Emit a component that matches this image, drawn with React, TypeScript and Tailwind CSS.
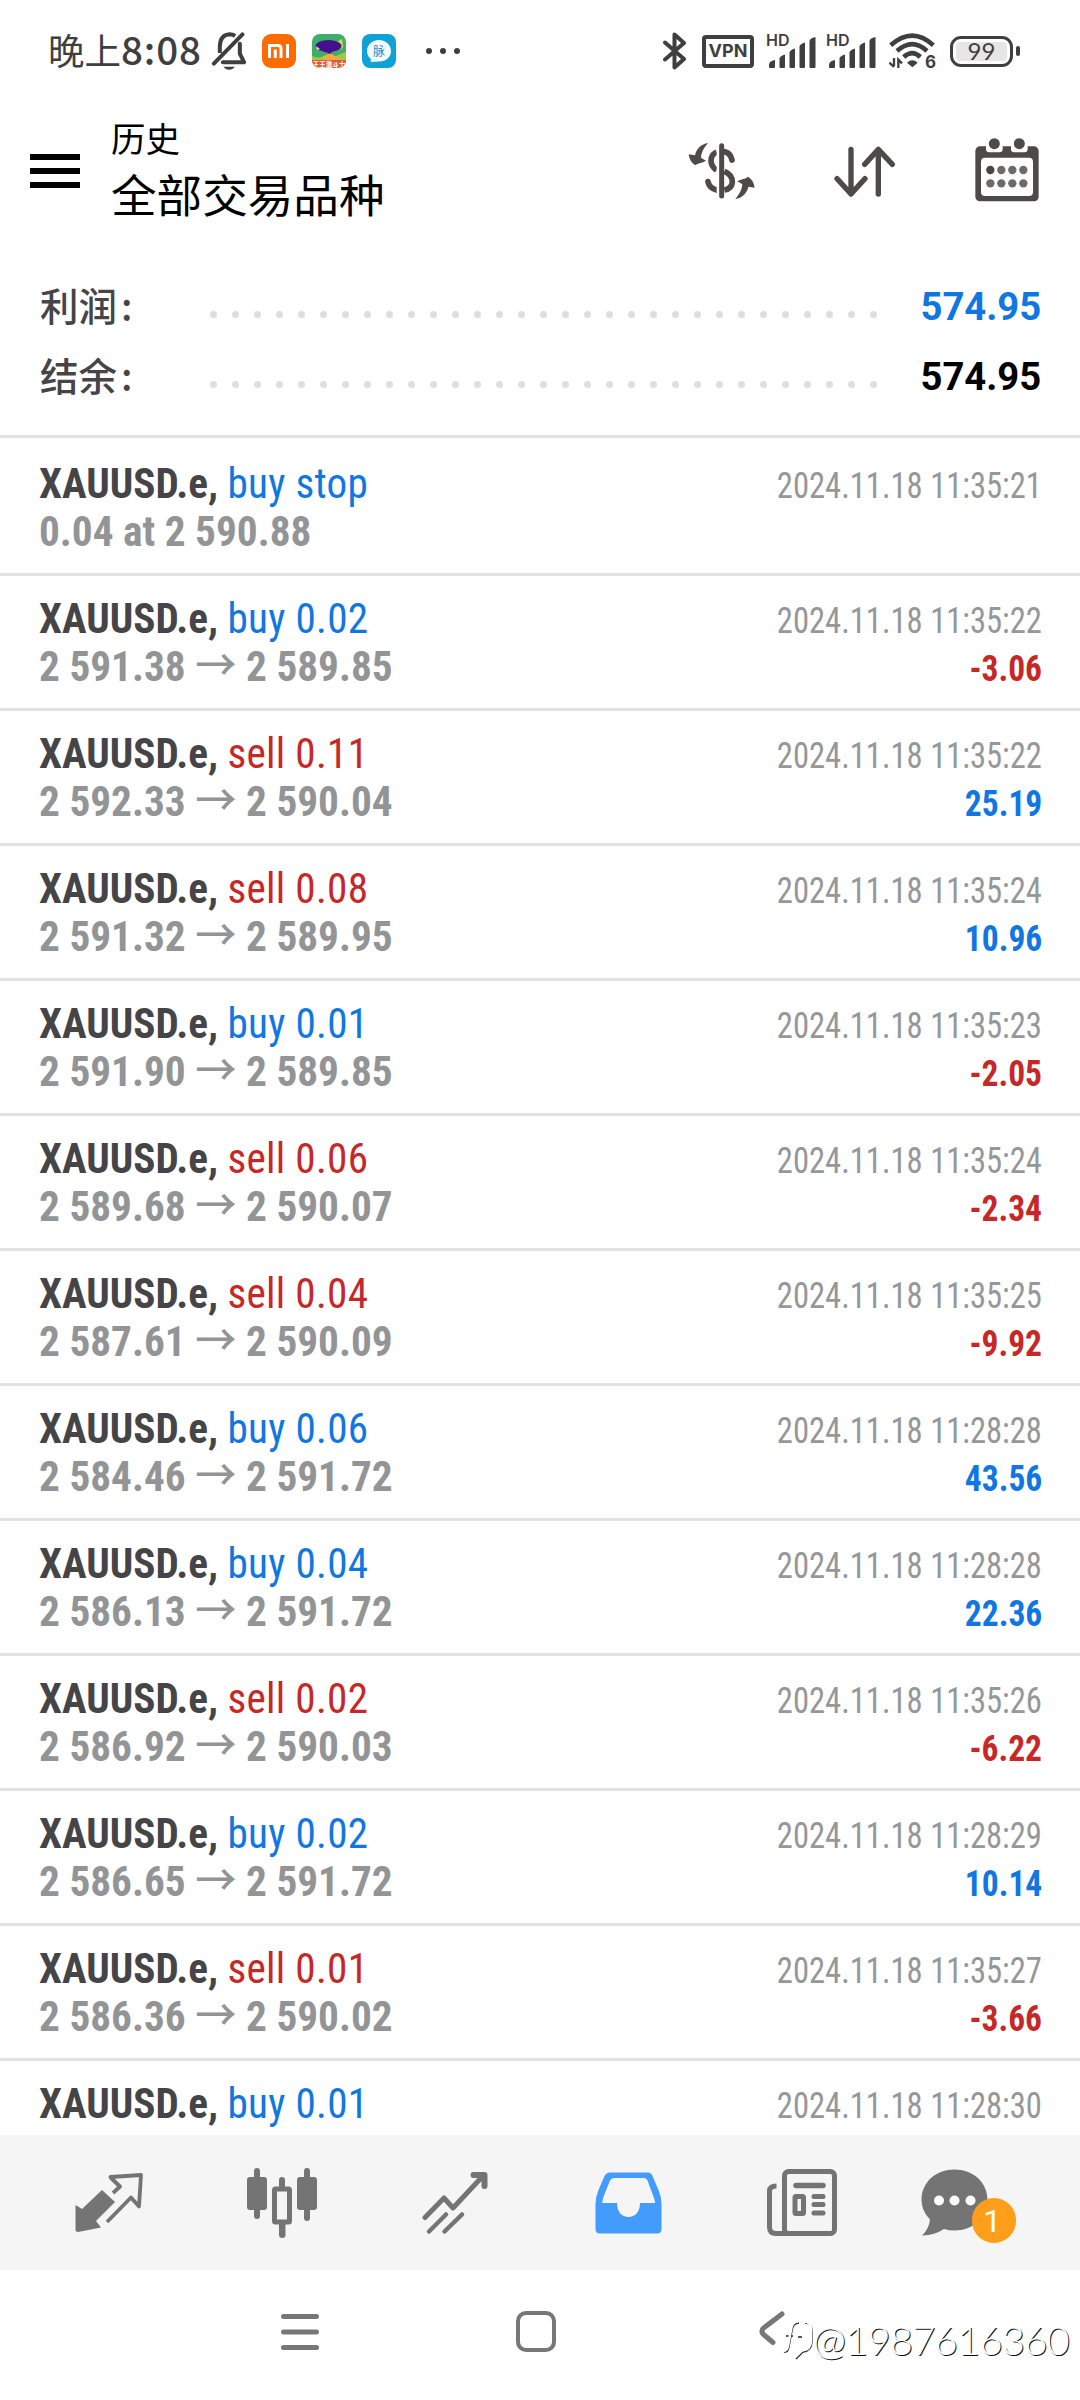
import type { ReactNode } from 'react'

type Side = 'buy' | 'sell'

interface Deal {
  side: Side
  volume: string
  open: string
  close: string
  time: string
  profit?: string
}

const SYMBOL = 'XAUUSD.e'

const deals: Deal[] = [
  { side: 'buy', volume: '0.02', open: '2 591.38', close: '2 589.85', time: '2024.11.18 11:35:22', profit: '-3.06' },
  { side: 'sell', volume: '0.11', open: '2 592.33', close: '2 590.04', time: '2024.11.18 11:35:22', profit: '25.19' },
  { side: 'sell', volume: '0.08', open: '2 591.32', close: '2 589.95', time: '2024.11.18 11:35:24', profit: '10.96' },
  { side: 'buy', volume: '0.01', open: '2 591.90', close: '2 589.85', time: '2024.11.18 11:35:23', profit: '-2.05' },
  { side: 'sell', volume: '0.06', open: '2 589.68', close: '2 590.07', time: '2024.11.18 11:35:24', profit: '-2.34' },
  { side: 'sell', volume: '0.04', open: '2 587.61', close: '2 590.09', time: '2024.11.18 11:35:25', profit: '-9.92' },
  { side: 'buy', volume: '0.06', open: '2 584.46', close: '2 591.72', time: '2024.11.18 11:28:28', profit: '43.56' },
  { side: 'buy', volume: '0.04', open: '2 586.13', close: '2 591.72', time: '2024.11.18 11:28:28', profit: '22.36' },
  { side: 'sell', volume: '0.02', open: '2 586.92', close: '2 590.03', time: '2024.11.18 11:35:26', profit: '-6.22' },
  { side: 'buy', volume: '0.02', open: '2 586.65', close: '2 591.72', time: '2024.11.18 11:28:29', profit: '10.14' },
  { side: 'sell', volume: '0.01', open: '2 586.36', close: '2 590.02', time: '2024.11.18 11:35:27', profit: '-3.66' },
  { side: 'buy', volume: '0.01', open: '2 586.37', close: '2 591.72', time: '2024.11.18 11:28:30' },
]

// ── Status bar ─────────────────────────────────────────────────────────

function SignalIcon() {
  return (
    <div className="relative h-[34px] w-[50px]">
      <span className="absolute -top-[4px] left-0 font-['Inter'] text-[16px] leading-[20px] font-semibold">HD</span>
      <svg className="absolute top-0 left-[3px]" width="47" height="34" viewBox="0 0 47 34" fill="#3f3f3f">
        <path d="M0 31 Q0 27 6 26 V33 Q6 34 5 34 H1 Q0 34 0 33Z" />
        <path d="M10.500 24.500 Q11 22 16 20.500 V33 Q16 34 15 34 H11.500 Q10.500 34 10.500 33Z" />
        <path d="M20.500 18.500 Q21 16 26 14.500 V33 Q26 34 25 34 H21.500 Q20.500 34 20.500 33Z" />
        <path d="M30.500 12.500 Q31 10 36 8.500 V33 Q36 34 35 34 H31.500 Q30.500 34 30.500 33Z" />
        <path d="M40.500 7 Q41 4 46.500 3 V33 Q46.500 34 45.500 34 H41.500 Q40.500 34 40.500 33Z" />
      </svg>
    </div>
  )
}

function StatusBar() {
  return (
    <div className="flex h-[102px] shrink-0 items-center pr-[60px] pl-[48px] text-[#3f3f3f]">
      <div className="-mt-[4px] flex w-[155px] items-baseline font-['Noto_Sans_CJK_SC',sans-serif] leading-[50px] font-medium whitespace-nowrap">
        <span className="text-[36.500px] font-normal">晚上</span>
        <span className="text-[38.500px] tracking-[0.900px]">8:08</span>
      </div>

      {/* Muted bell */}
      <svg className="ml-[8px]" width="37" height="40" viewBox="34 34 108 120" fill="none" stroke="#3f3f3f" strokeWidth="12">
        <path d="M59 100 V80 Q60 46 88 44 Q98 44 105 49" />
        <path d="M119 72 V102 L132 128 H68" strokeLinecap="round" strokeLinejoin="round" />
        <path d="M127 44 L41 132" strokeLinecap="round" />
        <path d="M70 141 H104 Q98 150 87 150 Q76 150 70 141Z" fill="#3f3f3f" stroke="none" />
      </svg>

      <svg className="ml-[14px] rounded-[9px] bg-[#fc6c00]" width="34" height="34" viewBox="0 0 34 34" fill="none" stroke="#fff" strokeWidth="3">
        <path d="M7.500 24 V11.500 H16 Q19 11.500 19 14.500 V24" />
        <path d="M13.300 15.500 V24" />
        <path d="M25.500 10 V24" />
      </svg>

      <div className="relative ml-[16px] h-[34px] w-[34px] overflow-hidden rounded-[8px]">
        <svg width="34" height="34" viewBox="0 0 34 34">
          <rect width="34" height="34" fill="#3fae6c" />
          <path d="M0 22 Q8 26 14 21 L24 22 L34 18 V27 H0Z" fill="#a5c93c" />
          <path d="M8 24 L18 19 L28 25 L20 27Z" fill="#f6a93b" />
          <path d="M25 8 L30 5 L31 13 L28 16Z" fill="#e4dc3a" />
          <ellipse cx="16.500" cy="12" rx="13" ry="6" fill="#43108f" />
          <path d="M11 17 L18 20 L22 16Z" fill="#43108f" />
          <path d="M4 12 L8 15 L5 16Z" fill="#f4e58a" />
          <path d="M0 26 H34 V34 H0Z" fill="#e4573c" />
        </svg>
        <span className="absolute bottom-0 left-0 w-full text-center font-['Noto_Sans_CJK_SC',sans-serif] text-[6.500px] leading-[8px] font-bold whitespace-nowrap text-white">王王激斗士</span>
      </div>

      <div className="relative ml-[16px] flex h-[34px] w-[34px] items-center justify-center rounded-[8px] bg-[#0ea3d4]">
        <svg className="absolute inset-0" width="34" height="34" viewBox="0 0 34 34" fill="#f3fbfe">
          <path d="M17 6 C24 6 29 11 29 17 C29 23 24 27.500 17.500 27.500 Q13 27.500 8.500 28 L9 25 Q5 22 5 17 C5 11 10 6 17 6Z" />
        </svg>
        <span className="relative font-['Noto_Sans_CJK_SC',sans-serif] text-[12px] leading-[14px] text-[#0e8fd0]">脉</span>
      </div>

      <svg className="ml-[29px]" width="36" height="8" viewBox="0 0 36 8" fill="#3f3f3f">
        <circle cx="4" cy="4" r="3" />
        <circle cx="18" cy="4" r="3" />
        <circle cx="32" cy="4" r="3" />
      </svg>

      <div className="ml-auto flex items-center">
        {/* Bluetooth */}
        <svg width="24" height="38" viewBox="0 0 24 38" fill="none" stroke="#3f3f3f" strokeWidth="4" strokeLinecap="round" strokeLinejoin="round">
          <path d="M2 10.500 L21 27 L11.500 35.500 V2.500 L21 11 L2 27.500" />
        </svg>
        <div className="ml-[15px] flex h-[33px] w-[52px] items-center justify-center rounded-[4px] border-[4px] border-[#3f3f3f] font-['Inter'] text-[18px] leading-none font-bold">
          VPN
        </div>
        <div className="ml-[12px] flex gap-[10px]">
          <SignalIcon />
          <SignalIcon />
        </div>
        {/* Wi-Fi 6 */}
        <div className="relative ml-[13px] h-[36px] w-[46px]">
          <svg width="46" height="36" viewBox="690 43 138 108" fill="none" stroke="#3f3f3f" strokeWidth="14">
            <path d="M695 80 Q760 22 823 80" />
            <path d="M714 97 Q760 56 804 97" />
            <path d="M734 115 Q760 92 784 115" />
            <path d="M744 132 Q760 118 776 132 L760 146Z" fill="#3f3f3f" stroke="none" />
            <path d="M705 118 V142 M691 132 L705 145 M718 148 V123 L729 134" strokeWidth="7" />
          </svg>
          <span className="absolute -right-[1px] -bottom-[3px] font-['Inter'] text-[17px] leading-[20px] font-bold">6</span>
        </div>
        {/* Battery */}
        <div className="ml-[15px] flex h-[31px] w-[63px] items-center justify-center rounded-[11px] border-[3.500px] border-[#3f3f3f] p-[3px]">
          <div className="flex h-full w-full items-center justify-center rounded-[4px] bg-[#e6e6e6] font-['Lato'] text-[24px] leading-none">
            99
          </div>
        </div>
        <div className="ml-[3px] h-[10px] w-[4px] rounded-full bg-[#3f3f3f]" />
      </div>
    </div>
  )
}

// ── App bar ────────────────────────────────────────────────────────────

function CurrencyIcon() {
  const arrow = 'M100 39 C80 42 65 56 61 76 L42 73 C44 88 50 99 62 106 C70 98 82 100 94 92 L79 83 C80 66 89 52 100 39Z'
  return (
    <svg width="67" height="58" viewBox="40 36 201 174" fill="none" stroke="#4f4a47" strokeWidth="17">
      <path d="M141 47 V198" strokeWidth="15" strokeLinecap="round" />
      <path d="M149 65 Q167 68 172 90" strokeLinecap="round" />
      <path d="M126 66 Q109 74 109 92 Q109 108 126 121" />
      <path d="M149 124 Q173 134 173 156 Q172 176 149 180" />
      <path d="M100 155 Q103 173 126 180" strokeLinecap="round" />
      <path d="M126 130 V190 H133 V58 H126Z" fill="#fff" stroke="none" />
      <path d={arrow} fill="#4f4a47" stroke="none" />
      <path d={arrow} fill="#4f4a47" stroke="none" transform="rotate(180 141 123)" />
    </svg>
  )
}

function SortIcon() {
  return (
    <svg width="62" height="51" viewBox="478 46 186 153" fill="none" stroke="#4f4a47" strokeWidth="16" strokeLinecap="round" strokeLinejoin="round">
      <path d="M529 56 V190 M487 144 L529 190 L571 144" />
      <path d="M611 190 V56 M570 101 L611 56 L653 101" />
    </svg>
  )
}

function CalendarIcon() {
  const xs = [945, 978, 1011, 1044]
  return (
    <svg width="64" height="64" viewBox="899 23 192 192">
      <rect x="900" y="48" width="190" height="165" rx="14" fill="#4f4a47" />
      <rect x="917" y="82" width="156" height="115" rx="12" fill="#fff" />
      <rect x="932" y="20" width="50" height="46" rx="10" fill="#fff" />
      <rect x="1007" y="20" width="50" height="46" rx="10" fill="#fff" />
      <circle cx="957" cy="40" r="16.500" fill="#4f4a47" />
      <circle cx="1032" cy="40" r="16.500" fill="#4f4a47" />
      {xs.map((x) => (
        <circle key={x} cx={x} cy="119" r="12.500" fill={x === 945 ? '#4a4542' : '#6d6a68'} />
      ))}
      {xs.map((x) => (
        <circle key={x} cx={x} cy="159" r="12.500" fill="#6d6a68" />
      ))}
    </svg>
  )
}

function AppBar() {
  return (
    <div className="flex h-[138px] shrink-0 items-center pr-[41px] pl-[30px]">
      <div className="flex w-[50px] flex-col gap-[8px]">
        <div className="h-[6px] bg-black" />
        <div className="h-[6px] bg-black" />
        <div className="h-[6px] bg-black" />
      </div>
      <div className="ml-[31px] font-['Noto_Sans_CJK_SC',sans-serif] text-black">
        <div className="-mt-[10px] text-[34.500px] leading-[54px]">历史</div>
        <div className="text-[45.600px] leading-[58px]">全部交易品种</div>
      </div>
      <div className="ml-auto flex items-center">
        <CurrencyIcon />
        <div className="ml-[79px]"><SortIcon /></div>
        <div className="-mt-[2px] ml-[79px]"><CalendarIcon /></div>
      </div>
    </div>
  )
}

// ── Summary ────────────────────────────────────────────────────────────

function SummaryRow({ label, value, valueClass }: { label: string; value: string; valueClass: string }) {
  return (
    <div className="flex h-[70px] items-center">
      <span className="-mt-[4px] w-[170px] font-['Noto_Sans_CJK_SC',sans-serif] text-[38.500px] font-medium text-[#454547]">
        {label}
        <span className="ml-[4px]">:</span>
      </span>
      <div className="mt-[15px] flex gap-[15px]">
        {Array.from({ length: 31 }, (_, i) => (
          <div key={i} className="h-[7px] w-[7px] rounded-full bg-[#dedede]" />
        ))}
      </div>
      <span className={`mt-[1px] ml-auto origin-right scale-x-[0.980] font-['Roboto'] text-[39px] font-bold ${valueClass}`}>{value}</span>
    </div>
  )
}

// ── History rows ───────────────────────────────────────────────────────

interface RowProps {
  action: string
  side: Side
  detail: ReactNode
  time: string
  profit?: string
  className?: string
}

function HistoryRow({ action, side, detail, time, profit, className = 'pt-[18px]' }: RowProps) {
  return (
    <div className={`border-b-[3px] border-[#e2e2e3] pr-[38px] pb-[18px] pl-[39px] font-['Roboto_Condensed'] text-[43px] leading-[48px] whitespace-nowrap ${className}`}>
      <div className="flex h-[48px] items-baseline justify-between">
        <div className="origin-left scale-x-[0.957]">
          <span className="font-bold text-[#454547]">{SYMBOL}, </span>
          <span className={`tracking-[0.300px] ${side === 'buy' ? 'text-[#1077e2]' : 'text-[#c62828]'}`}>{action}</span>
        </div>
        <span className="origin-right scale-x-[0.905] text-[36px] text-[#959798]">{time}</span>
      </div>
      <div className="flex h-[48px] items-baseline justify-between">
        <div className="origin-left scale-x-[0.960] font-bold text-[#929496]">{detail}</div>
        {profit && (
          <span className={`origin-right scale-x-[0.930] text-[36px] font-bold ${profit.startsWith('-') ? 'text-[#c62828]' : 'text-[#1077e2]'}`}>
            {profit}
          </span>
        )}
      </div>
    </div>
  )
}

// ── Bottom navigation ──────────────────────────────────────────────────

function QuotesIcon() {
  return (
    <svg width="68" height="60" viewBox="0 0 68 60">
      <path d="M27 17 L40 29 L21 48 L26 54.500 L3 59 Q0.500 59 0.500 57 V32 L7 36Z" fill="#747474" />
      <path d="M38 20 L45 13.500 L36 5 L35.500 4 L66 2 L64 33.500 L56 24.500 L32 49" fill="none" stroke="#747474" strokeWidth="3.800" strokeLinejoin="round" />
    </svg>
  )
}

function ChartsIcon() {
  return (
    <svg width="70" height="70" viewBox="0 0 70 70" fill="#747474">
      <rect x="0" y="9" width="20" height="33" rx="3" />
      <rect x="7" y="0" width="6" height="51" rx="3" />
      <rect x="50" y="9" width="20" height="33" rx="3" />
      <rect x="57" y="0" width="6" height="53" rx="3" />
      <rect x="32" y="9" width="6" height="14" rx="3" />
      <path d="M32 54 H38.500 V67 Q38.500 70 35.250 70 Q32 70 32 67Z" />
      <rect x="27.500" y="21" width="15" height="33" rx="1" fill="none" stroke="#747474" strokeWidth="5" />
    </svg>
  )
}

function TradeIcon() {
  return (
    <svg width="66" height="64" viewBox="0 0 66 64" fill="none" stroke="#747474" strokeWidth="5" strokeLinecap="round">
      <path d="M3 46.500 L22 27 L31 37 L60 6" strokeLinejoin="round" />
      <path d="M51.500 4 H62.500 V15" strokeWidth="6" strokeLinejoin="round" />
      <path d="M7 60.500 L24 43.500" strokeWidth="4.500" />
      <path d="M22.500 60.500 L40 43.500" strokeWidth="4.500" />
    </svg>
  )
}

function HistoryIcon() {
  return (
    <svg width="67" height="62" viewBox="0 0 67 62">
      <path
        fillRule="evenodd"
        fill="#429bfd"
        d="M15 0.500 H53 Q56 0.500 57.500 4 L63.500 18 Q66.500 25 66.500 32 V57 Q66.500 61.500 62 61.500 H5 Q0.500 61.500 0.500 57 V32 Q0.500 25 3.500 18 L9.500 4 Q11.500 0.500 15 0.500Z M19 6 Q16 6 15 8.500 L8 26 Q7 31 7.500 31 H22 C22 40 27 45 33.500 45 C40 45 45 40 45 31 H60 Q60.500 31 59 26 L52.500 8.500 Q51.500 6 49 6Z"
      />
    </svg>
  )
}

function NewsIcon() {
  return (
    <svg width="70" height="67" viewBox="0 0 70 67" fill="none" stroke="#747474" strokeWidth="5">
      <rect x="17.500" y="2.500" width="50" height="62" rx="4" />
      <path d="M9.500 17 Q2.500 17 2.500 22 V58 Q2.500 64.500 9 64.500 H22" />
      <path d="M29 16.500 H56" strokeLinecap="round" strokeWidth="5.500" />
      <rect x="28" y="27.500" width="8.500" height="17" rx="1" />
      <path d="M47 27.500 H56 M47 35.500 H56 M47 44 H56" strokeLinecap="round" />
    </svg>
  )
}

function MessagesIcon() {
  return (
    <div className="relative mr-[42px] h-[67px] w-[67px]">
      <svg width="67" height="67" viewBox="0 0 67 67">
        <path d="M33.500 0.500 C52 0.500 66.500 13 66.500 31 C66.500 49 52 61.500 33.500 61.500 Q28 61.500 23 60 Q14 66 1 66.500 Q8 60 9 50.500 Q0.500 42 0.500 31 C0.500 13 15 0.500 33.500 0.500Z" fill="#747474" />
        <circle cx="18" cy="31.500" r="5" fill="#fff" />
        <circle cx="33.500" cy="31.500" r="5" fill="#fff" />
        <circle cx="49.500" cy="31.500" r="5" fill="#fff" />
      </svg>
      <span className="absolute top-[29px] left-[51px] flex h-[45px] w-[44px] items-center justify-center rounded-full bg-[#ff9e1b] pr-[3px] font-['Roboto'] text-[32px] leading-none text-white">
        1
      </span>
    </div>
  )
}

function BottomNav() {
  return (
    <div className="grid h-[135px] shrink-0 grid-cols-6 items-center justify-items-center bg-[#f5f5f5] pr-[18px] pl-[22px]">
      <QuotesIcon />
      <ChartsIcon />
      <TradeIcon />
      <HistoryIcon />
      <NewsIcon />
      <MessagesIcon />
    </div>
  )
}

function SystemNav() {
  return (
    <div className="relative flex h-[130px] shrink-0 items-start pt-[41px] pl-[281px]">
      <svg width="38" height="42" viewBox="0 0 38 42" stroke="#777" strokeWidth="5" strokeLinecap="round">
        <path d="M2.500 5.500 H35.500 M2.500 21 H35.500 M2.500 36.500 H35.500" />
      </svg>
      <div className="ml-[197px] h-[41px] w-[40px] rounded-[10px] border-[4.500px] border-[#777]" />
      <svg className="ml-[203px]" width="28" height="41" viewBox="0 0 28 41" fill="none" stroke="#777" strokeWidth="5" strokeLinejoin="round">
        <path d="M23 3 L4 17.500 Q2 20.500 4 23 L14 31.500" strokeLinecap="round" />
      </svg>

      {/* Watermark */}
      <div className="absolute top-[46px] right-[11px] flex items-center text-white">
        <svg className="mr-[-2px]" width="32" height="42" viewBox="0 0 32 42" fill="none" strokeWidth="2.500">
          <path d="M1 33 Q5 34 6 28 L9 12 Q10 4 16 4 M3 17 H10 M15 18 H19 M22 4 Q29 4 29 12 V22 Q29 32 20 33 L13 40" stroke="#222" strokeWidth="1.400" />
          <path d="M0 31.500 Q4 32.500 5 27 L8 11 Q9 2.500 15 2.500 M21 2.500 Q28 2.500 28 11 V21 Q28 31 19 31.500 L12 38" stroke="#fff" />
        </svg>
        <span className="font-['Lato'] text-[40px] leading-[48px] font-light tracking-[-0.800px] text-shadow-[1px_1px_0px_#111]">@1987616360</span>
      </div>
    </div>
  )
}

export default function App() {
  return (
    <div className="flex h-[2400px] w-[1080px] flex-col overflow-hidden bg-white">
      <StatusBar />
      <AppBar />
      <div className="shrink-0 border-b-[3px] border-[#e2e2e3] pt-[32px] pr-[39px] pb-[23px] pl-[40px]">
        <SummaryRow label="利润" value="574.95" valueClass="text-[#1077e2]" />
        <SummaryRow label="结余" value="574.95" valueClass="text-black" />
      </div>

      <div className="min-h-0 flex-1 overflow-hidden">
        <HistoryRow action="buy stop" side="buy" detail="0.04 at 2 590.88" time="2024.11.18 11:35:21" className="pt-[21px]" />
        {deals.map((deal, i) => (
          <HistoryRow
            key={i}
            action={`${deal.side} ${deal.volume}`}
            side={deal.side}
            detail={
              <>
                {deal.open} <span className="font-['Noto_Sans_CJK_SC',sans-serif] leading-[0] font-medium">→</span> {deal.close}
              </>
            }
            time={deal.time}
            profit={deal.profit}
          />
        ))}
      </div>

      <BottomNav />
      <SystemNav />
    </div>
  )
}
